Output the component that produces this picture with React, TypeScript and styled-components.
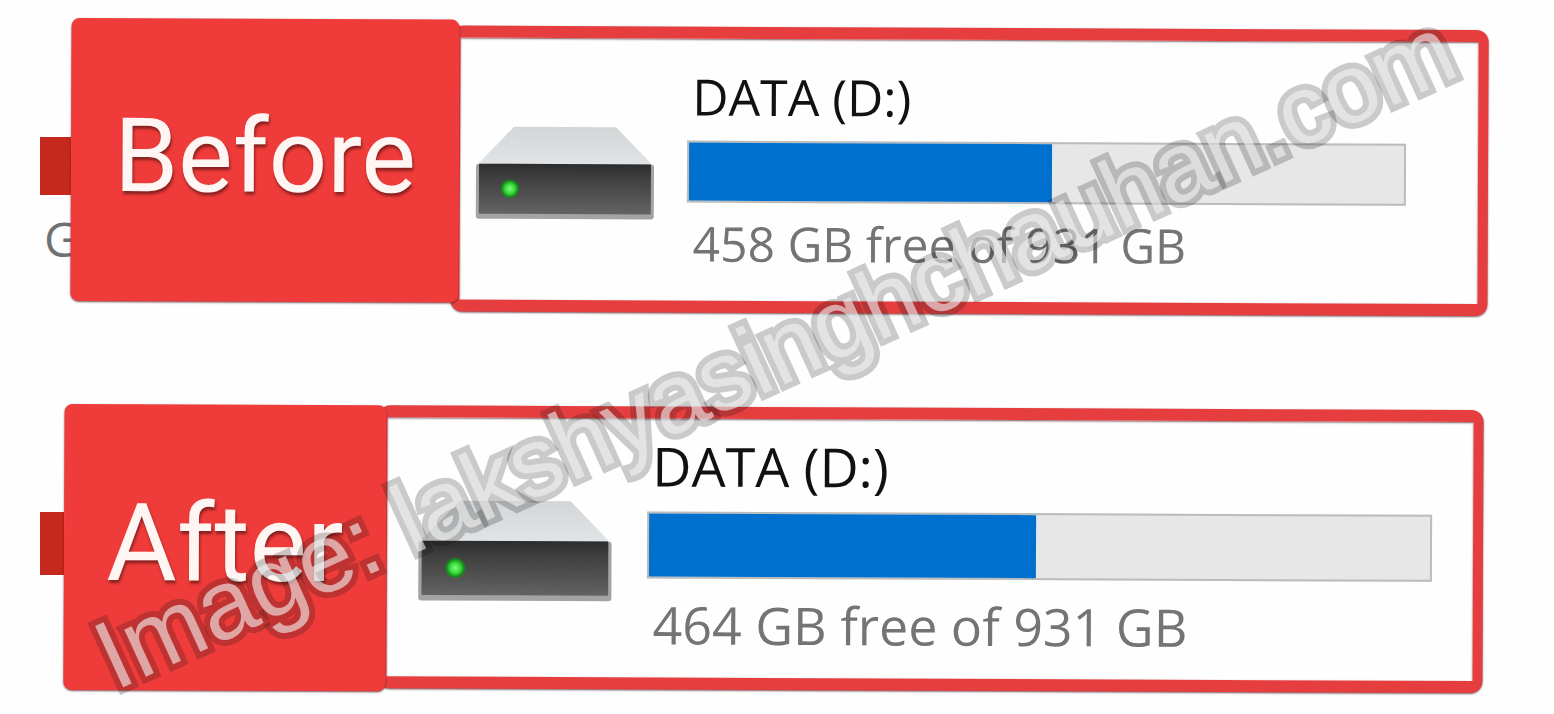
import React from "react";
import styled, { createGlobalStyle } from "styled-components";

const GlobalStyle = createGlobalStyle`
  * { box-sizing: border-box; }
  body {
    margin: 0;
    background: #fefefe;
    font-family: "Open Sans", "Noto Sans", sans-serif;
  }
`;

type Size = "regular" | "large";

const Page = styled.main`
  position: relative;
  min-height: 100vh;
  overflow: hidden;
  display: flex;
  flex-direction: column;
  gap: 94px;
  padding: 21px 66px 0 40px;
`;

const Row = styled.section<{ $size: Size }>`
  display: flex;
  align-items: flex-start;
  margin-right: ${(p) => (p.$size === "large" ? 5 : 0)}px;
`;

const Peek = styled.div<{ $size: Size }>`
  flex: none;
  width: ${(p) => (p.$size === "large" ? 24 : 31)}px;
  padding-top: ${(p) => (p.$size === "large" ? 105 : 116)}px;
`;

const PeekBar = styled.div<{ $size: Size }>`
  height: ${(p) => (p.$size === "large" ? 63 : 58)}px;
  background: #c5281c;
`;

const PeekText = styled.p`
  margin: 16px 0 0 4px;
  font-size: 48px;
  line-height: 56px;
  color: #6e7272;
`;

const Panel = styled.div`
  flex: 1;
  min-width: 0;
  display: flex;
  align-items: flex-start;
  transform: rotate(0.25deg);
`;

const Label = styled.h2<{ $size: Size }>`
  position: relative;
  z-index: 1;
  flex: none;
  display: flex;
  align-items: center;
  justify-content: center;
  width: ${(p) => (p.$size === "large" ? 322 : 388)}px;
  height: ${(p) => (p.$size === "large" ? 286 : 283)}px;
  margin: 0;
  padding-bottom: 8px;
  border-radius: 8px;
  background: #ef3c3a;
  box-shadow: 0 1px 2px rgba(70, 20, 30, 0.7);
  color: #fff5f3;
  font-family: Roboto, "Liberation Sans", sans-serif;
  font-size: ${(p) => (p.$size === "large" ? 108 : 103)}px;
  font-weight: 400;
  line-height: 1;
  text-shadow: 1px 3px 3px rgba(90, 20, 20, 0.7);
`;

const Frame = styled.div<{ $size: Size }>`
  flex: 1;
  min-width: 0;
  display: flex;
  align-items: flex-start;
  gap: ${(p) => (p.$size === "large" ? 34 : 32)}px;
  height: ${(p) => (p.$size === "large" ? 283 : 286)}px;
  margin-top: ${(p) => (p.$size === "large" ? 0 : 6)}px;
  margin-left: -8px;
  padding: ${(p) => (p.$size === "large" ? "17px 41px 0 30px" : "30px 72px 0 15px")};
  border: 12px solid #e63e3f;
  border-right-width: 10px;
  border-left-width: 9px;
  border-radius: 12px;
  background: #fefefe;
  box-shadow: 0 1px 2px rgba(70, 20, 30, 0.7), inset 0 1px 2px rgba(70, 20, 30, 0.7);
`;

const DriveIcon = styled.svg<{ $size: Size }>`
  flex: none;
  width: ${(p) => (p.$size === "large" ? 196 : 180)}px;
  height: ${(p) => (p.$size === "large" ? 102 : 94)}px;
  margin-top: ${(p) => (p.$size === "large" ? 65 : 58)}px;
`;

const Details = styled.div`
  flex: 1;
  min-width: 0;
`;

const DriveName = styled.h3<{ $size: Size }>`
  margin: 0;
  padding-left: 5px;
  font-size: ${(p) => (p.$size === "large" ? 54 : 50)}px;
  line-height: ${(p) => (p.$size === "large" ? 60 : 56)}px;
  font-weight: 400;
  color: #111;
  white-space: nowrap;
`;

const Meter = styled.div<{ $size: Size }>`
  height: ${(p) => (p.$size === "large" ? 67 : 62)}px;
  margin: 16px 0;
  border: 2px solid #bcbcbc;
  background: #e7e7e7;
`;

const MeterFill = styled.div`
  height: 100%;
  background: #0070ce;
`;

const Capacity = styled.p<{ $size: Size }>`
  margin: 0;
  padding-left: 6px;
  font-size: ${(p) => (p.$size === "large" ? 52 : 48)}px;
  line-height: ${(p) => (p.$size === "large" ? 60 : 50)}px;
  color: #747474;
  white-space: nowrap;
`;

const Watermark = styled.p`
  position: absolute;
  z-index: 2;
  left: 50%;
  top: 50%;
  margin: 0;
  padding-bottom: 12px;
  transform: translate(-50%, -50%) rotate(-24.6deg);
  font-family: "Liberation Sans", Arial, sans-serif;
  font-size: 98px;
  line-height: 112px;
  white-space: nowrap;
  color: rgba(244, 244, 244, 0.6);
  -webkit-text-stroke: 12px rgba(20, 20, 20, 0.22);
  paint-order: stroke fill;
  pointer-events: none;
`;

function Drive({ size }: { size: Size }) {
  const id = `drive-${size}`;
  return (
    <DriveIcon $size={size} viewBox="0 0 180 94" role="img" aria-label="Hard drive">
      <defs>
        <linearGradient id={`${id}-front`} x1="0" y1="0" x2="0" y2="1">
          <stop offset="0" stopColor="#2c2c2c" />
          <stop offset="0.25" stopColor="#3e3e3e" />
          <stop offset="1" stopColor="#636363" />
        </linearGradient>
        <linearGradient id={`${id}-top`} x1="0" y1="0" x2="0" y2="1">
          <stop offset="0" stopColor="#d3d5d7" />
          <stop offset="1" stopColor="#e1e4e6" />
        </linearGradient>
        <radialGradient id={`${id}-led`}>
          <stop offset="0" stopColor="#7dff7d" />
          <stop offset="0.5" stopColor="#35d73a" />
          <stop offset="0.8" stopColor="#178a1a" />
          <stop offset="1" stopColor="#178a1a" stopOpacity="0" />
        </radialGradient>
      </defs>
      <path d="M39 1h102l36 37H3z" fill={`url(#${id}-top)`} />
      <rect x="1" y="38" width="178" height="55" rx="3" fill="#a3a3a3" />
      <rect x="4" y="38" width="172" height="50" rx="1" fill={`url(#${id}-front)`} />
      <circle cx="35" cy="63" r="10" fill={`url(#${id}-led)`} />
    </DriveIcon>
  );
}

interface DriveRowProps {
  label: string;
  size: Size;
  capacity: string;
  used: number;
  peek?: string;
}

function DriveRow({ label, size, capacity, used, peek }: DriveRowProps) {
  return (
    <Row $size={size}>
      <Peek $size={size}>
        <PeekBar $size={size} />
        {peek && <PeekText>{peek}</PeekText>}
      </Peek>
      <Panel>
        <Label $size={size}>{label}</Label>
        <Frame $size={size}>
          <Drive size={size} />
          <Details>
            <DriveName $size={size}>DATA (D:)</DriveName>
            <Meter
              $size={size}
              role="meter"
              aria-label={`${label}: space used`}
              aria-valuemin={0}
              aria-valuemax={100}
              aria-valuenow={used}
            >
              <MeterFill style={{ width: `${used}%` }} />
            </Meter>
            <Capacity $size={size}>{capacity}</Capacity>
          </Details>
        </Frame>
      </Panel>
    </Row>
  );
}

export default function App() {
  return (
    <>
      <GlobalStyle />
      <Page>
        <DriveRow label="Before" size="regular" capacity="458 GB free of 931 GB" used={50.8} peek="G" />
        <DriveRow label="After" size="large" capacity="464 GB free of 931 GB" used={49.6} />
        <Watermark>Image: lakshyasinghchauhan.com</Watermark>
      </Page>
    </>
  );
}
